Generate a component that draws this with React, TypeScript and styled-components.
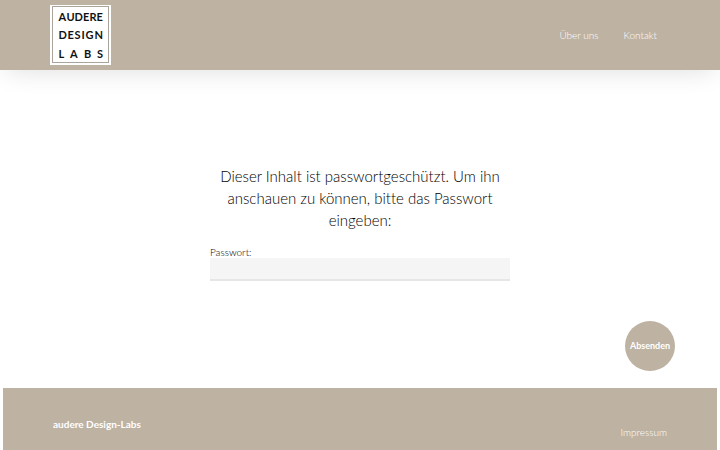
import React from "react";
import styled, { createGlobalStyle } from "styled-components";

const sand = "#beb2a3";

const GlobalStyle = createGlobalStyle`
  *, *::before, *::after { box-sizing: border-box; }
  html, body, #root { height: 100%; }
  body {
    margin: 0;
    background: #fff;
    color: #000;
    font-family: Lato, sans-serif;
    font-weight: 300;
    font-variant-ligatures: none;
  }
`;

const Page = styled.div`
  min-height: 100%;
  display: flex;
  flex-direction: column;
`;

const Header = styled.header`
  display: flex;
  align-items: center;
  justify-content: space-between;
  padding: 5px 50px;
  background: ${sand};
  box-shadow: 0 8px 24px -6px rgba(0, 0, 0, 0.12);
`;

const LogoLink = styled.a`
  display: block;
  line-height: 0;
`;

const Nav = styled.nav`
  display: flex;
  gap: 25px;
  padding-right: 13px;
`;

const TextLink = styled.a`
  color: #fff;
  font-size: 10px;
  line-height: 14px;
  text-decoration: none;
`;

const Main = styled.main`
  flex: 1;
  display: flex;
  flex-direction: column;
  padding: 95px 45px 17px;
`;

const Form = styled.form`
  flex: 1;
  display: flex;
  flex-direction: column;
  align-items: center;
`;

const Prompt = styled.p`
  width: 100%;
  max-width: 300px;
  margin: 0;
  font-size: 15px;
  line-height: 22px;
  text-align: center;
`;

const Field = styled.div`
  width: 100%;
  max-width: 300px;
  margin-top: 15px;
  display: flex;
  flex-direction: column;
`;

const Label = styled.label`
  font-size: 10px;
  line-height: 12px;
`;

const Input = styled.input`
  width: 100%;
  height: 23px;
  padding: 0 8px;
  border: 0;
  border-bottom: 2px solid #e6e6e6;
  border-radius: 0;
  background: #f5f5f5;
  font: inherit;
  font-size: 10px;
`;

const Submit = styled.button`
  align-self: flex-end;
  width: 50px;
  height: 50px;
  margin-top: auto;
  padding: 0;
  border: 0;
  border-radius: 50%;
  background: ${sand};
  color: #fff;
  font: 700 9px/12px Lato, sans-serif;
`;

const Footer = styled.footer`
  display: flex;
  justify-content: space-between;
  margin: 0 3px;
  padding: 29px 50px 11px;
  background: ${sand};
`;

const Brand = styled.strong`
  color: #fff;
  font-size: 10px;
  line-height: 14px;
  font-weight: 700;
`;

const FooterNav = styled.nav`
  display: flex;
  padding-top: 8px;
`;

function Logo() {
  return (
    <svg width="61" height="60" viewBox="0 0 61 60" role="img" aria-label="Audere Design Labs">
      <rect width="61" height="60" fill="#fff" />
      <rect x="2.5" y="1.5" width="56" height="56" fill="none" stroke="#aaa49b" strokeWidth="1" />
      <g fill="#111" fontFamily="Lato, sans-serif" fontWeight="700" fontSize="11">
        <text x="8.5 16.5 24.5 33 39.5 46.5" y="16">AUDERE</text>
        <text x="8.5 17.5 24.5 31.5 35.5 44.5" y="34">DESIGN</text>
        <text x="8.5 20 34 47" y="53">LABS</text>
      </g>
    </svg>
  );
}

export default function App() {
  return (
    <>
      <GlobalStyle />
      <Page>
        <Header>
          <LogoLink href="#"><Logo /></LogoLink>
          <Nav>
            <TextLink href="#ueber-uns">Über uns</TextLink>
            <TextLink href="#kontakt">Kontakt</TextLink>
          </Nav>
        </Header>
        <Main>
          <Form onSubmit={(event) => event.preventDefault()}>
            <Prompt>Dieser Inhalt ist passwortgeschützt. Um ihn anschauen zu können, bitte das Passwort eingeben:</Prompt>
            <Field>
              <Label htmlFor="password">Passwort:</Label>
              <Input id="password" type="password" />
            </Field>
            <Submit type="submit">Absenden</Submit>
          </Form>
        </Main>
        <Footer>
          <Brand>audere Design-Labs</Brand>
          <FooterNav><TextLink href="#impressum">Impressum</TextLink></FooterNav>
        </Footer>
      </Page>
    </>
  );
}
